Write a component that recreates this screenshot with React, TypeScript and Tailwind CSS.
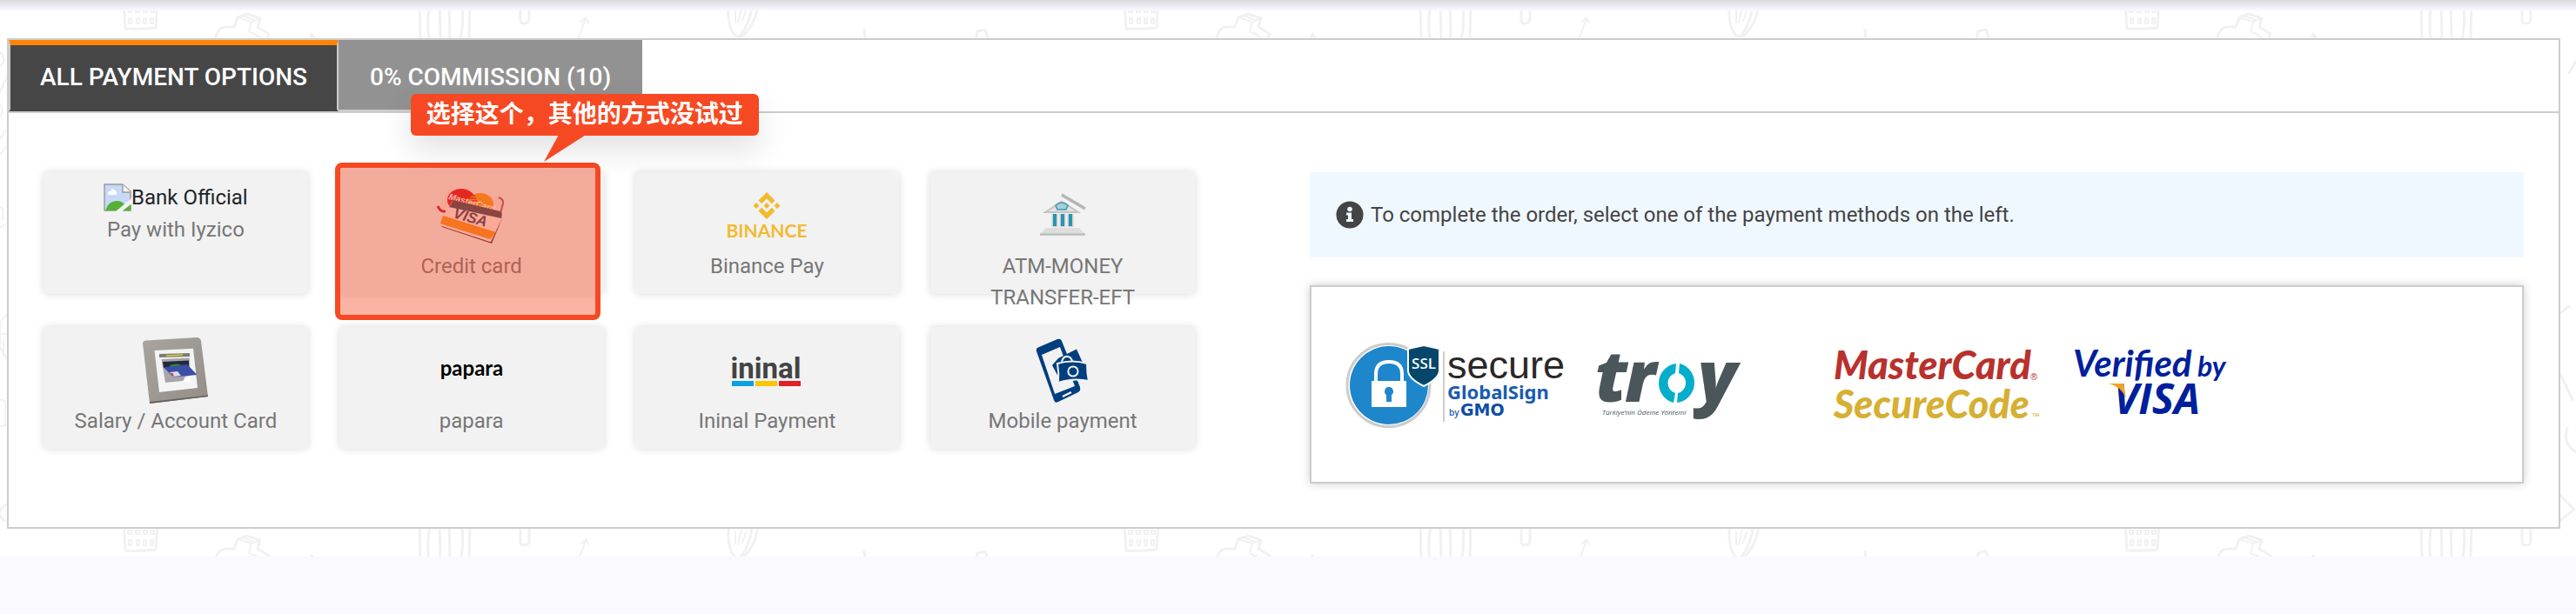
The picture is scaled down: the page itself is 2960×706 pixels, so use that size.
import type { ReactNode } from "react";

const doodle = { fill: "none", stroke: "#f1f1f1", strokeWidth: 3, strokeLinecap: "round" as const, strokeLinejoin: "round" as const };

function DoodleBackground() {
  return (
    <svg aria-hidden="true" className="absolute inset-0 h-full w-full">
      <defs>
        <pattern id="doodles" width="1150" height="600" patternUnits="userSpaceOnUse" y="-12">
          <g {...doodle}>
            <path d="M142 0 L144 33 Q162 34 179 32 L181 0" />
            <path strokeWidth="2" d="M147 10v4h4v-4zM156 10v4h4v-4zM165 10v4h4v-4zM173 10v4h4v-4zM148 21v6h3v-6zM157 21v6h3v-6zM165 21v6h3v-6zM173 21v6h3v-6z" />
            <path d="M247 48 Q249 32 259 31 L269 31 L273 20 L284 16 L299 21 L296 31 L309 39 L306 46" />
            <path strokeWidth="2" d="M273 20 L289 25 L286 36 L304 46 M289 25 L299 21 M279 18 L292 23 M292 38 L300 44" />
            <path d="M356 46 L358 39 L361 43" />
            <path d="M482 0 L483 46 M495 0 Q490 20 493 46 M505 0 L506 46 M516 0 L517 46 M530 0 Q534 22 529 46 M540 0 L539 46" />
            <path d="M598 0 V23 Q598 27 602 27 Q608 27 608 22 V0" />
            <path strokeWidth="2" d="M664 46 L673 21 M668 25 L673 20 L676 26" />
            <path d="M838 0 Q834 28 844 40 Q850 45 856 39 Q871 22 871 0 M864 0 Q865 22 850 42" />
            <path strokeWidth="2" d="M845 12 V26 M852 10 L848 26 M857 12 L853 24" />
            <path d="M993 34 L994 46 M1121 46 L1123 36 L1132 34 L1136 46" />
            <path strokeWidth="2" d="M0 60 Q8 68 1 76 M8 88 L0 106 M0 120 Q6 128 0 134 M6 150 L0 160 M0 178 L8 168 M0 238 L3 240 V252 M0 262 L5 258 M0 374 Q0 368 8 362 M0 376 V400 L8 412 M0 384 H8 M4 392 V410 M0 460 Q8 458 6 470 V490 H0" />
            <path d="M8 580 Q-8 588 6 600" />
            <path d="M660 70 L652 84 M642 360 L652 352 M642 430 L656 460 M650 492 Q644 510 660 520 M642 570 L658 586 L642 598" />
          </g>
        </pattern>
      </defs>
      <rect width="100%" height="100%" fill="url(#doodles)" />
    </svg>
  );
}

function BrokenImage() {
  return (
    <svg viewBox="0 0 32 32" className="size-8 shrink-0" aria-hidden="true">
      <path d="M1 1H22L31 9V31H1Z" fill="#c6d9f7" stroke="#999" strokeWidth="1.4" />
      <path d="M2 31 Q6 20 15 20 Q21 20 24 24 L17 31Z" fill="#56b038" />
      <path d="M5 13 Q4 9 8 9 Q10 4 13 8 Q16 9 15 13Z" fill="#fff" />
      <path d="M22 1V10H31" fill="#fff" stroke="#999" strokeWidth="1.4" />
      <path d="M32 17 V24 L22 32 H14Z" fill="#f2f2f2" />
      <path d="M22 31.3H31.3V24Z" fill="#56b038" />
    </svg>
  );
}

function CreditCards() {
  return (
    <svg viewBox="0 0 78 66" className="h-[66px] w-[78px] overflow-visible" aria-hidden="true">
      <path d="M11 5 Q13 0 20 2 L70 12 Q75 14 74 18 L69 40 L2 24Z" fill="#f8e6e6" />
      <path d="M70 12 Q76 14 75 19 L71 34" fill="none" stroke="#9a5560" strokeWidth="2" />
      <ellipse cx="27" cy="15" rx="16" ry="13" fill="#d9101c" />
      <ellipse cx="49" cy="20" rx="15" ry="13" fill="#f59a1c" />
      <path d="M35 10h8M35 13h9M35 16h10" stroke="#d9101c" strokeWidth="1.4" />
      <text x="12" y="14" fontSize="10" fontWeight="700" fontStyle="italic" fill="#fff" fontFamily="Liberation Sans, sans-serif" transform="rotate(15 12 14)">MasterCard</text>
      <path d="M0 22 Q3 29 9 28" stroke="#c80f28" strokeWidth="3" fill="none" />
      <path d="M75 34 L62 65 L5 46 L3 44 L61 63Z" fill="#5b2b3a" />
      <path d="M17 16 L73 30 L74 34 L60 63 L2 44 L1 41Z" fill="#fdeeea" />
      <path d="M18 15 L72 28 Q75 30 73 36 L13 23Z" fill="#3d4257" />
      <path d="M6 33 L67 52 L60 60 L3 42Z" fill="#f7921c" />
      <text x="17" y="35" fontSize="17" fontWeight="700" fontStyle="italic" fill="#3b3c5c" fontFamily="Liberation Sans, sans-serif" transform="rotate(16 17 35)">VISA</text>
    </svg>
  );
}

function BinanceLogo() {
  return (
    <svg viewBox="0 0 100 60" className="h-[60px] w-[100px] overflow-visible" aria-hidden="true">
      <g fill="#f3ba2f">
        <path d="M50 3 L59.5 12.5 L55.8 16.2 L50 10.4 L44.2 16.2 L40.5 12.5Z" />
        <path d="M50 34 L59.500 24.500 L55.800 20.800 L50 26.600 L44.200 20.800 L40.500 24.500Z" />
        <path d="M38 15 L41.5 18.5 L38 22 L34.5 18.5ZM62 15 L65.5 18.5 L62 22 L58.5 18.5ZM50 15 L53.5 18.5 L50 22 L46.500 18.500Z" />
        <text x="50" y="55" textAnchor="middle" fontSize="21" fontWeight="700" fontFamily="Lato, sans-serif">BINANCE</text>
      </g>
    </svg>
  );
}

function BankIcon() {
  return (
    <svg viewBox="0 0 56 52" className="h-[52px] w-14" aria-hidden="true">
      <path d="M27 2 L54 18" stroke="#b5b5b5" strokeWidth="3.5" />
      <path d="M8 22 L27 10 L46 22Z" fill="#e3e3e3" stroke="#c4c4c4" strokeWidth="2" />
      <path d="M20 14 Q27 8 34 14 L32 19 H22Z" fill="#a8cfd8" stroke="#3e9bb4" strokeWidth="1.6" />
      <path d="M19 24V39M28 24V39M37 24V39" stroke="#d0d0d0" strokeWidth="7" />
      <path d="M19 24V38M28 24V38M37 24V38" stroke="#2c94b1" strokeWidth="4" />
      <path d="M9 40H47L53 46H3Z" fill="#dedede" />
      <path d="M2 47.5H54" stroke="#bcbcbc" strokeWidth="2.5" />
    </svg>
  );
}

function AtmIcon() {
  return (
    <svg viewBox="0 0 78 80" className="h-20 w-[78px]" aria-hidden="true">
      <defs>
        <linearGradient id="atmBody" x1="0" y1="0" x2="1" y2="1">
          <stop offset="0" stopColor="#aaa49f" />
          <stop offset="1" stopColor="#948e89" />
        </linearGradient>
      </defs>
      <path d="M1 9 Q1 6 5 5.6 L63 2 Q67 2 68 6 L76 70 L9 78Z" fill="url(#atmBody)" />
      <path d="M9 76 L76 68.5 V70 L9 78Z" fill="#67615d" />
      <path d="M14.5 17 L59 14.7 L64 60 L20 65Z" fill="#f4f4f5" />
      <path d="M20 21 L55 20 V24 L20 25Z" fill="#7e7c70" />
      <path d="M28 23 L47 22" stroke="#d1cd45" strokeWidth="1.6" />
      <path d="M22.5 27 L54.6 25.5 L56 51 L27 54Z" fill="#a6a6aa" />
      <path d="M24 30 L54 28.5 V35 L25 37Z" fill="#26293a" />
      <path d="M32 34 Q40 31 46 34 L44 36 H33Z" fill="#2f8d35" />
      <path d="M25 36.5 L52 33 L63.5 45 L36 47.5Z" fill="#3b4fa8" />
      <path d="M32 42 L41 41 L45 46 L36 47Z" fill="#dcdce8" />
      <path d="M34 43 L36 46" stroke="#d33" strokeWidth="2" />
      <path d="M50 47 L56 46 V53 L47 53Z" fill="#fff" />
    </svg>
  );
}

function PaparaLogo() {
  return (
    <svg viewBox="0 0 90 40" className="h-10 w-[90px] overflow-visible" aria-hidden="true">
      <text x="45" y="26" textAnchor="middle" fontSize="24" fontWeight="700" fill="#000" fontFamily="Lato, sans-serif">papara</text>
    </svg>
  );
}

function IninalLogo() {
  return (
    <svg viewBox="0 0 84 44" className="h-11 w-[84px] overflow-visible" aria-hidden="true">
      <text x="41" y="31" textAnchor="middle" fontSize="33" fontWeight="700" fill="#434343" fontFamily="Roboto, sans-serif">ininal</text>
      <path d="M2 34H27V40H2Z" fill="#0aa1e2" />
      <path d="M29 34H54V40H29Z" fill="#fdc400" />
      <path d="M56 34H81V40H56Z" fill="#e41e25" />
    </svg>
  );
}

function MobileIcon() {
  return (
    <svg viewBox="0 0 64 78" className="h-[78px] w-16" aria-hidden="true">
      <path d="M2 17 Q1 13 5 12 L26 3 Q30 2 31 5 L52 58 Q53 62 50 64 L27 75 Q23 77 22 73Z" fill="#003f7f" />
      <path d="M8 21 L29 12 L46 57 L23 66Z" fill="#f2f2f2" />
      <path d="M32 69 L42 64" stroke="#f2f2f2" strokeWidth="2.4" />
      <path d="M20 33 L27 25 L48 14.5 L56 32 L27 46Z" fill="#003f7f" />
      <path d="M26 31 Q43 26 60 31 Q60 42 62 51 Q44 47 27 53 Q28 42 26 31Z" fill="#003f7f" stroke="#f2f2f2" strokeWidth="2" />
      <path d="M31 29 Q33 22 38 23 Q42 24 43 28" fill="none" stroke="#f2f2f2" strokeWidth="2" />
      <circle cx="44" cy="40" r="5.6" fill="#003f7f" stroke="#f2f2f2" strokeWidth="2" />
    </svg>
  );
}

function SslLogo() {
  return (
    <svg viewBox="0 0 252 100" className="h-[100px] w-[252px] shrink-0 overflow-visible" role="img" aria-label="SSL secure GlobalSign by GMO">
      <circle cx="50.5" cy="51" r="47.5" fill="#fff" stroke="#ccc" strokeWidth="3" />
      <circle cx="51" cy="51" r="45" fill="#1e86cb" />
      <path d="M36 50 V38 Q36 24 51 24 Q66 24 66 38 V50" fill="none" stroke="#fff" strokeWidth="4" />
      <rect x="31" y="46" width="40" height="30" fill="#fff" />
      <path d="M51 53 a5 5 0 0 1 3 9 V70 H48 V62 a5 5 0 0 1 3 -9" fill="#1e86cb" />
      <path d="M73 9 L91 5 L109 9 V34 Q109 43 91 52 Q73 43 73 34Z" fill="#05476a" stroke="#fff" strokeWidth="2" />
      <text x="91" y="32" textAnchor="middle" fontSize="17" fill="#fff" fontWeight="600" fontFamily="Open Sans, sans-serif">SSL</text>
      <path d="M114 12V93" stroke="#ccc" strokeWidth="2" />
      <text x="118" y="43" fontSize="45" fill="#2b2729" fontFamily="Liberation Sans, sans-serif">secure</text>
      <text x="118" y="67" fontSize="22" fill="#1b5bb0" fontWeight="700" fontFamily="Noto Sans, sans-serif">GlobalSign</text>
      <text x="120" y="86" fontSize="10" fill="#1b5bb0" fontWeight="600" fontFamily="Open Sans, sans-serif">by</text>
      <text x="133" y="86" fontSize="19" fill="#0d4ea6" fontWeight="700" fontFamily="DejaVu Sans, sans-serif">GMO</text>
    </svg>
  );
}

function TroyLogo() {
  return (
    <svg viewBox="0 0 238 100" className="h-[100px] w-[238px] shrink-0 overflow-visible" role="img" aria-label="troy">
      <g fill="#4b565b" fontFamily="Open Sans, sans-serif" fontStyle="italic">
        <text x="0" y="70" fontSize="82" fontWeight="800">t</text>
        <text x="34" y="70" fontSize="82" fontWeight="800">r</text>
        <text x="118" y="70" fontSize="82" fontWeight="800">y</text>
        <text x="8" y="85" fontSize="8">Türkiye’nin Ödeme Yöntemi</text>
      </g>
      <path d="M93 26 A23 23 0 0 0 90 71 L92 60 A12 12 0 0 1 92 37Z" fill="#06aecb" />
      <path d="M97 26 A23 23 0 0 1 94 71 L95 60 A12 12 0 0 0 96 37Z" fill="#06aecb" />
    </svg>
  );
}

function SecureCodeLogo() {
  return (
    <svg viewBox="0 0 236 100" className="h-[100px] w-[236px] shrink-0 overflow-visible" role="img" aria-label="MasterCard SecureCode">
      <g fontFamily="Lato, sans-serif" fontWeight="900" fontStyle="italic">
        <text x="0" y="44" fontSize="45" fill="#b8312d">MasterCard</text>
        <text x="0" y="89" fontSize="45" fill="#d6af33">SecureCode</text>
      </g>
      <text x="226" y="45" fontSize="11" fill="#b8312d" fontFamily="Liberation Sans, sans-serif">®</text>
      <text x="227" y="90" fontSize="10" fill="#d6af33" fontFamily="Liberation Sans, sans-serif">™</text>
    </svg>
  );
}

function VerifiedByVisaLogo() {
  return (
    <svg viewBox="0 0 184 100" className="h-[100px] w-[184px] shrink-0 overflow-visible" role="img" aria-label="Verified by VISA">
      <g fill="#001f9c" fontStyle="italic">
        <text x="3" y="41" fontSize="42" fontWeight="700" fontFamily="Lato, sans-serif">Verified</text>
        <text x="146" y="41" fontSize="32" fontWeight="700" fontFamily="Lato, sans-serif">by</text>
        <text x="50" y="84" fontSize="48" fontWeight="700" fontFamily="Open Sans, sans-serif">VISA</text>
      </g>
      <path d="M44 49 H61 L64 66 Q58 52 44 49Z" fill="#f6a01f" />
    </svg>
  );
}

type Method = { label: string; icon: ReactNode; alt?: string };

const methods: Method[] = [
  { label: "Pay with Iyzico", icon: <BrokenImage />, alt: "Bank Official" },
  { label: "Credit card", icon: <CreditCards /> },
  { label: "Binance Pay", icon: <BinanceLogo /> },
  { label: "ATM-MONEY TRANSFER-EFT", icon: <BankIcon /> },
  { label: "Salary / Account Card", icon: <AtmIcon /> },
  { label: "papara", icon: <PaparaLogo /> },
  { label: "Ininal Payment", icon: <IninalLogo /> },
  { label: "Mobile payment", icon: <MobileIcon /> },
];

function MethodCard({ method }: { method: Method }) {
  return (
    <button
      type="button"
      className="flex h-[140px] w-full flex-col items-center rounded-sm bg-[#f2f2f2] px-7 pt-2.5 text-2xl leading-9 text-[#777] shadow-[0_0_10px_rgba(0,0,0,0.15)]"
    >
      {method.alt ? (
        <span className="flex h-[38px] items-center text-[#212529]">
          {method.icon}
          {method.alt}
        </span>
      ) : (
        <span className="flex h-20 shrink-0 items-center justify-center">{method.icon}</span>
      )}
      <span>{method.label}</span>
    </button>
  );
}

function Callout() {
  return (
    <div className="pointer-events-none absolute inset-0 z-10">
      <div className="absolute -top-[11px] right-1 -bottom-[30px] -left-[5px] rounded-lg border-6 border-[#f64923] bg-[#f64923]/42 bg-clip-padding" />
      <div className="absolute -top-[90px] left-[82px] rounded-md bg-[#f64923] px-[18px] text-[28px] leading-12 font-bold whitespace-nowrap text-white shadow-[0_16px_36px_rgba(0,0,0,0.12)]">
        选择这个，其他的方式没试过
        <svg viewBox="0 0 48 32" className="absolute top-full left-[152px] -mt-px h-8 w-12" aria-hidden="true">
          <path d="M18 0H49L1 31Z" fill="#f64923" />
        </svg>
      </div>
    </div>
  );
}

export default function App() {
  return (
    <div className="min-h-screen bg-[#f9f9ff] font-[Roboto,'Noto_Sans_CJK_SC',sans-serif]">
      <div className="h-3 bg-linear-to-b from-[#d9d9de] to-[#f9f9ff]" />
      <main className="relative bg-white py-8 pr-[18px] pl-2">
        <DoodleBackground />
        <section className="relative border-2 border-[#ccc] bg-white">
          <nav className="flex h-[84px] items-start border-b-2 border-[#ccc] text-[28px] leading-9 font-medium text-white">
            <button type="button" className="h-[82px] border-x-2 border-t-6 border-b-2 border-x-[#ccc] border-t-[#ff8405] border-b-[#464646] bg-[#464646] px-[34px]">
              ALL PAYMENT OPTIONS
            </button>
            <button type="button" className="h-[82px] border-t-6 border-b-2 border-t-[#929292] border-b-[#ccc] bg-[#929292] px-9">
              0% COMMISSION (10)
            </button>
          </nav>
          <div className="grid grid-cols-[1323fr_1395fr] gap-[132px] px-10 pt-[68px] pb-[50px]">
            <ul className="grid grid-cols-4 content-start gap-x-9 gap-y-[38px]">
              {methods.map((method) => (
                <li key={method.label} className="relative">
                  <MethodCard method={method} />
                  {method.label === "Credit card" && <Callout />}
                </li>
              ))}
            </ul>
            <div className="flex flex-col gap-8">
              <p className="flex items-center gap-2 bg-[#f0f8ff] px-[30px] py-[31px] text-2xl leading-9 text-[#444]">
                <svg viewBox="0 0 32 32" className="size-8" aria-hidden="true">
                  <circle cx="16" cy="16" r="15.600" fill="#444" />
                  <circle cx="16" cy="9.500" r="2.800" fill="#f0f8ff" />
                  <path d="M12 13.500H18V21H20V24H12V21H14V16.500H12Z" fill="#f0f8ff" />
                </svg>
                To complete the order, select one of the payment methods on the left.
              </p>
              <div className="flex h-[228px] items-center gap-9 border-2 border-[#ccc] bg-white px-[38px] shadow-[0_0_10px_rgba(0,0,0,0.2)]">
                <SslLogo />
                <TroyLogo />
                <SecureCodeLogo />
                <VerifiedByVisaLogo />
              </div>
            </div>
          </div>
        </section>
      </main>
    </div>
  );
}
